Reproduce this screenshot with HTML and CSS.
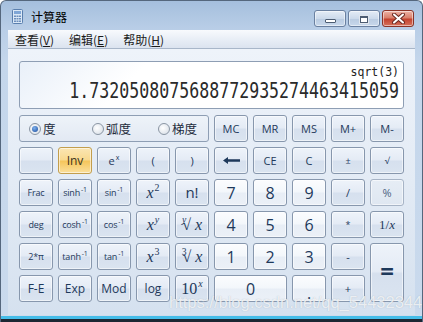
FILE: index.html
```html
<!DOCTYPE html>
<html>

<head>
    <meta charset="UTF-8">
    <meta name="viewport" content="width=device-width, initial-scale=1.0">
    <link rel="stylesheet" href="styles.css">
    <title>计算器</title>
</head>

<body>
    <div class="window">
        <div class="titlebar">
            <svg class="app-icon" width="11" height="15" viewBox="0 0 11 15">
                <rect x="0.5" y="0.5" width="10" height="14" rx="1" fill="#dbe8f6" stroke="#5a7fae" />
                <rect x="2" y="2" width="7" height="3" fill="#7fa6d6" />
                <g fill="#6d8fbd">
                    <rect x="2" y="6.5" width="2" height="1.5" />
                    <rect x="4.5" y="6.5" width="2" height="1.5" />
                    <rect x="7" y="6.5" width="2" height="1.5" />
                    <rect x="2" y="9" width="2" height="1.5" />
                    <rect x="4.5" y="9" width="2" height="1.5" />
                    <rect x="7" y="9" width="2" height="1.5" />
                    <rect x="2" y="11.5" width="2" height="1.5" />
                    <rect x="4.5" y="11.5" width="2" height="1.5" />
                    <rect x="7" y="11.5" width="2" height="1.5" />
                </g>
            </svg>
            <span class="title">计算器</span>
            <div class="caption">
                <div class="cap"><span class="cap-min"></span></div>
                <div class="cap"><span class="cap-max"></span></div>
                <div class="cap cap-close">
                    <svg width="13" height="11" viewBox="0 0 13 11">
                        <path d="M2 1.5 L11 9.5 M11 1.5 L2 9.5" stroke="#6b2a22" stroke-width="4" stroke-linecap="round" />
                        <path d="M2 1.5 L11 9.5 M11 1.5 L2 9.5" stroke="#ffffff" stroke-width="2" stroke-linecap="round" />
                    </svg>
                </div>
            </div>
        </div>
        <div class="client">
            <div class="menubar">
                <span class="menu">查看(<u>V</u>)</span>
                <span class="menu">编辑(<u>E</u>)</span>
                <span class="menu">帮助(<u>H</u>)</span>
            </div>
            <div class="calc">
                <div class="display">
                    <div class="expr">sqrt(3)</div>
                    <div class="value">1.7320508075688772935274463415059</div>
                </div>
                <div class="keys">
                    <div class="angle">
                        <label class="radio"><span class="dot checked"></span>度</label>
                        <label class="radio"><span class="dot"></span>弧度</label>
                        <label class="radio"><span class="dot"></span>梯度</label>
                    </div>
                    <button class="key">MC</button>
                    <button class="key">MR</button>
                    <button class="key">MS</button>
                    <button class="key">M+</button>
                    <button class="key">M-</button>

                    <button class="key"></button>
                    <button class="key inv">Inv</button>
                    <button class="key">e<sup class="tiny">x</sup></button>
                    <button class="key">(</button>
                    <button class="key">)</button>
                    <button class="key">
                        <svg width="17" height="7" viewBox="0 0 17 7">
                            <path d="M0 3.5 L5 0 L5 2.3 L17 2.3 L17 4.7 L5 4.7 L5 7 Z" fill="#1e395b" />
                        </svg>
                    </button>
                    <button class="key">CE</button>
                    <button class="key">C</button>
                    <button class="key small">±</button>
                    <button class="key small">√</button>

                    <button class="key small">Frac</button>
                    <button class="key small">sinh<sup class="tiny">-1</sup></button>
                    <button class="key small">sin<sup class="tiny">-1</sup></button>
                    <button class="key math"><i>x</i><sup>2</sup></button>
                    <button class="key big">n!</button>
                    <button class="key digit">7</button>
                    <button class="key digit">8</button>
                    <button class="key digit">9</button>
                    <button class="key">/</button>
                    <button class="key pale">%</button>

                    <button class="key small">deg</button>
                    <button class="key small">cosh<sup class="tiny">-1</sup></button>
                    <button class="key small">cos<sup class="tiny">-1</sup></button>
                    <button class="key math"><i>x</i><sup><i>y</i></sup></button>
                    <button class="key math"><sup class="idx"><i>y</i></sup>√ <i>x</i></button>
                    <button class="key digit">4</button>
                    <button class="key digit">5</button>
                    <button class="key digit">6</button>
                    <button class="key small">*</button>
                    <button class="key math frac">1/<i>x</i></button>

                    <button class="key small">2*π</button>
                    <button class="key small">tanh<sup class="tiny">-1</sup></button>
                    <button class="key small">tan<sup class="tiny">-1</sup></button>
                    <button class="key math"><i>x</i><sup>3</sup></button>
                    <button class="key math"><sup class="idx">3</sup>√ <i>x</i></button>
                    <button class="key digit">1</button>
                    <button class="key digit">2</button>
                    <button class="key digit">3</button>
                    <button class="key">-</button>
                    <button class="key equals">=</button>

                    <button class="key mid">F-E</button>
                    <button class="key mid">Exp</button>
                    <button class="key mid">Mod</button>
                    <button class="key mid">log</button>
                    <button class="key math">10<sup><i>x</i></sup></button>
                    <button class="key digit zero">0</button>
                    <button class="key digit dot-key">.</button>
                    <button class="key">+</button>
                </div>
            </div>
        </div>
        <div class="frame-bottom"></div>
        <div class="watermark">https://blog.csdn.net/qq_54432344</div>
    </div>
</body>

</html>
```

FILE: styles.css
```css
/* Windows 7 Basic 主題的計算機 */
body {
    margin: 0;
    padding: 0;
    background-color: #ffffff;
}

.window {
    position: relative;
    width: 423px;
    height: 322px;
    box-sizing: border-box;
    border: 1px solid #55677d;
    border-bottom: none;
    border-radius: 6px 6px 0 0;
    background: linear-gradient(#a5bfdd 0px, #b9cee7 28px, #c4d6eb 60px, #cadaed 100%);
    overflow: hidden;
    display: flex;
    flex-direction: column;
}

.titlebar {
    height: 29px;
    display: flex;
    align-items: center;
    padding-left: 11px;
    flex-shrink: 0;
}

.app-icon {
    margin-top: 1px;
}

.title {
    margin-left: 8px;
    font-family: "Noto Sans CJK SC", sans-serif;
    font-size: 12px;
    color: #000000;
    margin-top: 1px;
}

.caption {
    margin-left: auto;
    margin-right: 8px;
    display: flex;
    gap: 2px;
    align-self: flex-start;
    margin-top: 9px;
}

.cap {
    width: 30px;
    height: 15px;
    border: 1px solid #6a80a0;
    border-radius: 3px;
    background: linear-gradient(#e4ecf6 0%, #ccdaeb 50%, #b9cbe1 51%, #c8d8ec 100%);
    box-shadow: inset 0 0 0 1px rgba(255, 255, 255, 0.5);
    display: flex;
    align-items: center;
    justify-content: center;
}

.cap-min {
    width: 9px;
    height: 2px;
    margin-top: 5px;
    background-color: #ffffff;
    border: 1px solid #4d5d73;
    border-radius: 1px;
}

.cap-max {
    width: 6px;
    height: 4px;
    border: 1px solid #4d5d73;
    border-top-width: 2px;
    background-color: #ffffff;
    box-shadow: 0 0 0 1px #e0e6ee;
    margin-top: 1px;
}

.cap-close {
    border-color: #8a3327;
    background: linear-gradient(#eeb3a5 0%, #d9806c 45%, #c4432f 55%, #d5715b 100%);
}

.client {
    flex: 1;
    min-height: 0;
    margin: 0 7px;
    display: flex;
    flex-direction: column;
}

.menubar {
    height: 18px;
    flex-shrink: 0;
    border-bottom: 1px solid #a8b6c9;
    background: linear-gradient(#f8fafd, #e6ecf5 60%, #dbe3ef);
    display: flex;
    align-items: center;
    padding-left: 7px;
    font-family: "Noto Sans CJK SC", sans-serif;
    font-size: 12px;
    color: #1a1a1a;
}

.menu {
    margin-right: 15px;
}

.menu u {
    text-underline-offset: 1px;
}

.calc {
    flex: 1;
    padding: 12px 11px 0 11px;
    background: linear-gradient(#eef3fa 0%, #e3ebf5 50%, #d5e1ef 100%);
}

/* 視窗下緣 */
.frame-bottom {
    height: 7px;
    flex-shrink: 0;
    border-top: 1px solid #cfdcec;
    border-bottom: 3px solid #1c2733;
    background-color: #45bde9;
    box-sizing: border-box;
}

.display {
    height: 48px;
    box-sizing: border-box;
    border: 1px solid #8e9eb4;
    border-radius: 3px;
    background: linear-gradient(135deg, #e9f0f9 0%, #ffffff 30%, #ffffff 100%);
    padding: 2px 4px 0 0;
    text-align: right;
    font-family: "DejaVu Sans Mono", monospace;
    color: #1c1c1c;
}

.expr {
    font-size: 11.5px;
    line-height: 16px;
    color: #222222;
}

.value {
    font-size: 16.6px;
    line-height: 24px;
    color: #2a2a2a;
    transform: scaleY(1.25);
    transform-origin: right center;
}

.keys {
    margin-top: 6px;
    display: grid;
    grid-template-columns: repeat(10, 34px);
    grid-auto-rows: 27px;
    gap: 5px;
}

.angle {
    grid-column: span 5;
    border: 1px solid #8e9eb4;
    border-radius: 3px;
    background: linear-gradient(#eef3f9, #e2e9f3);
    display: flex;
    align-items: center;
    padding-left: 9px;
    font-family: "Noto Sans CJK SC", sans-serif;
    font-size: 12.5px;
    color: #1e2b3c;
}

.radio {
    display: flex;
    align-items: center;
    flex-shrink: 0;
    width: 63px;
}

.radio + .radio {
    width: 66px;
}

.dot {
    width: 10px;
    height: 10px;
    border: 1px solid #8a95a3;
    border-radius: 50%;
    background: radial-gradient(circle at 40% 40%, #ffffff, #d4dbe4);
    margin-right: 2px;
    position: relative;
}

.dot.checked::after {
    content: "";
    position: absolute;
    left: 2px;
    top: 2px;
    width: 6px;
    height: 6px;
    border-radius: 50%;
    background: radial-gradient(circle at 40% 35%, #7fb2ee, #17489a);
}

.key {
    padding: 0;
    margin: 0;
    border: 1px solid #8797ad;
    border-radius: 3px;
    background: linear-gradient(#eef3fa 0%, #e4ebf5 48%, #d6e0ee 52%, #dae4f0 100%);
    box-shadow: inset 0 0 0 1px rgba(255, 255, 255, 0.55);
    color: #1e395b;
    font-family: "Open Sans", sans-serif;
    font-size: 11px;
    line-height: 1;
    display: flex;
    align-items: center;
    justify-content: center;
}

.key.small {
    font-size: 9px;
    letter-spacing: -0.2px;
}

.key.mid {
    font-size: 12px;
}

.key.big {
    font-size: 15px;
}

.key.digit {
    font-size: 16px;
    background: linear-gradient(#fbfcfe 0%, #f3f7fb 48%, #e8eef6 52%, #ebf0f7 100%);
}

.key.dot-key {
    padding-top: 8px;
}

.key.pale {
    color: #4a6280;
    background: linear-gradient(#e6edf5, #dfe7f1);
    border-color: #a7b4c6;
}

.key.inv {
    font-size: 12px;
    color: #3a3320;
    border-color: #c39e4d;
    background: linear-gradient(#fbe6b3 0%, #f8d98f 48%, #f5c55a 52%, #fbe09d 100%);
}

.key.math {
    font-family: "Liberation Serif", serif;
    font-size: 16px;
    white-space: pre;
}

.key.frac {
    font-size: 13px;
}

.key sup {
    font-size: 0.62em;
    position: relative;
    top: -0.45em;
    vertical-align: baseline;
    margin-left: 1px;
}

.key sup.tiny {
    font-size: 7px;
    top: -0.5em;
}

.key sup.idx {
    font-size: 0.6em;
    margin-right: -4px;
    margin-left: 0;
    top: -0.5em;
}

.key.equals {
    grid-row: span 2;
    font-size: 24px;
    font-weight: bold;
    padding-bottom: 3px;
}

.key.zero {
    grid-column: span 2;
}

.watermark {
    position: absolute;
    left: 168px;
    top: 292px;
    font-family: "Liberation Sans", sans-serif;
    font-size: 16.5px;
    color: rgba(255, 255, 255, 0.75);
    text-shadow: 0 0 1px rgba(120, 140, 160, 0.5);
    white-space: nowrap;
}
```
